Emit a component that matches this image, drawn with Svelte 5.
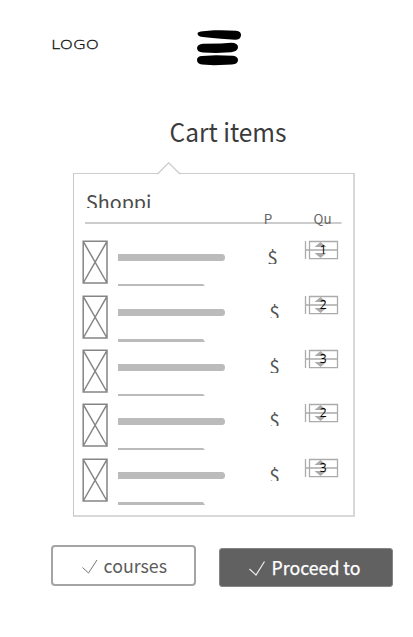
<script>
  const items = [
    { qty: 1, pitch: 55, bar: 14, line: 44, thick: 2, priceX: 268, clip: 24 },
    { qty: 2, pitch: 54, bar: 14, line: 44, thick: 3, priceX: 270, clip: 23 },
    { qty: 3, pitch: 54, bar: 15, line: 45, thick: 2, priceX: 270, clip: 24 },
    { qty: 2, pitch: 55, bar: 15, line: 45, thick: 2, priceX: 270, clip: 23 },
    { qty: 3, pitch: 54, bar: 14, line: 44, thick: 3, priceX: 270, clip: 23 }
  ];
</script>

<main>
  <header>
    <svg class="logo" width="50" height="16" viewBox="0 0 50 16" role="img" aria-label="LOGO">
      <text class="hand" x="0" y="12.8" textLength="48" lengthAdjust="spacingAndGlyphs">LOGO</text>
    </svg>
    <svg class="burger" width="46" height="38" viewBox="0 0 46 38" aria-hidden="true">
      <path d="M1.5 4.2Q2 2.6 7 2.3L18 1.3Q31 1 40 1.7Q45.5 2.5 45 6.5Q44.5 10.8 39 10.7L25 9.8Q13 9 5 7.8Q1.5 7 1.5 4.2Z" />
      <path d="M1 19Q1.5 15.2 7 14.7L25 14.5L35 13.8Q42 14 42 18Q42 22.5 35 23.2L20 24L7 23.5Q1 23 1 19Z" />
      <path d="M1 31Q1 27.3 6 27L20 26.3L37 26.8Q42 27.5 42 31Q42 35 36 35.6L18 36.3L6 35.6Q1 34.8 1 31Z" />
    </svg>
  </header>

  <h1>
    <svg width="124" height="40" viewBox="0 0 124 40">
      <text x="1.5" y="26.5" font-size="25.5" fill="#3b3b3b" textLength="117" lengthAdjust="spacingAndGlyphs">Cart items</text>
    </svg>
  </h1>

  <section class="card">
    <svg class="pointer" width="24" height="13" viewBox="0 0 24 13" aria-hidden="true">
      <path d="M0.5 11.5L11.7 0.8L23 11.5V13H0.5Z" fill="#fff" />
      <path d="M0 11.5H1L11.7 0.8L22.5 11.5H24" fill="none" stroke="#cdcdcd" stroke-width="1.3" />
    </svg>

    <svg class="heading" width="90" height="17" viewBox="0 0 90 17">
      <text x="0" y="18.7" font-size="20" fill="#4b4b4b" textLength="65.5" lengthAdjust="spacingAndGlyphs">Shoppi</text>
    </svg>

    <svg class="columns" width="262" height="19" viewBox="0 0 262 19">
      <path d="M0 15H256.5" stroke="#cccccc" stroke-width="2" />
      <text x="178.7" y="16" font-size="13.5" fill="#666">P</text>
      <text x="228.5" y="16" font-size="13.5" fill="#666" textLength="18" lengthAdjust="spacingAndGlyphs">Qu</text>
    </svg>

    <ul>
      {#each items as item}
        <li style:height="{item.pitch}px">
          <svg class="thumb" width="27" height="44" viewBox="0 0 27 44" aria-hidden="true">
            <path d="M1.2 1.3H25V43H1.2ZL25 43M25 1.3L1.2 43" />
          </svg>
          <svg class="lines" width="110" height="50" viewBox="0 0 110 50" aria-hidden="true">
            <path d="M0 {item.bar}H104Q107 {item.bar} 107 {item.bar + 3.5}T104 {item.bar + 7}H0Z" />
            <path d="M0 {item.line}H85L87 {item.line + item.thick}H0Z" />
          </svg>
          <svg class="price" width="30" height={item.clip} viewBox="0 0 30 {item.clip}">
            <text x={item.priceX - 260.7} y="25" font-size="19" fill="#555">$</text>
          </svg>
          <svg class="stepper" width="36" height="22" viewBox="0 0 36 22">
            <path class="frame" d="M1.5 1V19M5.5 1.5H33.5V18.7H5.5ZM1 10H33" />
            <path class="arrows" d="M10.5 7L16.5 2L22.5 7ZM10.5 13L16.5 18L22.5 13Z" />
            <text class="qty" x="19.3" y="14" text-anchor="middle">{item.qty}</text>
          </svg>
        </li>
      {/each}
    </ul>
  </section>

  <footer>
    <button class="outline">
      <svg width="120" height="36" viewBox="0 0 120 36">
        <path d="M1.5 20.5L7.5 26L16 13" fill="none" stroke="#777" stroke-width="1" />
        <text x="22.5" y="26" font-size="18.5" fill="#5c5c5c" textLength="63.5" lengthAdjust="spacingAndGlyphs">courses</text>
      </svg>
    </button>
    <button class="solid">
      <svg width="130" height="36" viewBox="0 0 130 36">
        <path d="M0.5 20L7 26L15.5 12.5" fill="none" stroke="#eee" stroke-width="1.2" />
        <text x="22.5" y="25.5" font-size="18.5" fill="#fff" stroke="#fff" stroke-width="0.25" textLength="89" lengthAdjust="spacingAndGlyphs">Proceed to</text>
      </svg>
    </button>
  </footer>
</main>

<style>
  :global(body) {
    background: #fff;
  }
  main {
    box-sizing: border-box;
    width: 413px;
    height: 637px;
    overflow: hidden;
    background: #fff;
    font-family: "Noto Sans CJK SC", "Open Sans", sans-serif;
  }
  svg {
    display: block;
    flex: none;
  }
  header {
    display: flex;
    height: 115px;
    padding-left: 51px;
    box-sizing: border-box;
  }
  .logo {
    margin-top: 36px;
  }
  .hand {
    font-family: "DejaVu Sans", sans-serif;
    font-weight: 200;
    font-size: 13px;
    fill: #111;
    stroke: #111;
    stroke-width: 0.3px;
  }
  .burger {
    margin: 29px 0 0 95px;
  }
  h1 {
    margin: 0 0 0 168px;
    height: 58px;
    font-weight: 400;
  }
  .card {
    position: relative;
    box-sizing: border-box;
    width: 282px;
    height: 344px;
    margin-left: 73px;
    border: 1px solid #cdcdcd;
    border-right: 2px solid #d8d8d8;
    border-bottom: 2px solid #d8d8d8;
    border-left-color: #c8c8c8;
    padding: 17px 0 0 8px;
  }
  .pointer {
    position: absolute;
    left: 83px;
    top: -12px;
  }
  .heading {
    margin-left: 4px;
  }
  .columns {
    margin-left: 3px;
  }
  ul {
    list-style: none;
    margin: 13px 0 0;
    padding: 0;
  }
  li {
    display: flex;
    align-items: flex-start;
  }
  .thumb path {
    fill: none;
    stroke: #858585;
    stroke-width: 1.5;
  }
  .lines {
    margin-left: 9px;
    fill: #bbb;
  }
  .price {
    margin-left: 32px;
  }
  .stepper {
    margin-left: 14px;
  }
  .frame {
    fill: none;
    stroke: #ababab;
    stroke-width: 1.3;
  }
  .arrows {
    fill: #aaa;
  }
  .qty {
    font-family: "Open Sans", sans-serif;
    font-size: 12px;
    fill: #000;
  }
  footer {
    display: flex;
    padding: 28px 0 0 51px;
  }
  button {
    display: flex;
    align-items: flex-start;
    box-sizing: border-box;
    margin: 0;
    padding: 0;
    font: inherit;
  }
  .outline {
    width: 145px;
    height: 41px;
    padding-left: 28px;
    background: #fff;
    border: 2px solid #a4a4a4;
    border-radius: 4px;
  }
  .solid {
    width: 174px;
    height: 39px;
    margin: 3px 0 0 23px;
    padding-left: 29px;
    background: #616161;
    border: 1px solid #858585;
    border-radius: 3px;
  }
</style>
